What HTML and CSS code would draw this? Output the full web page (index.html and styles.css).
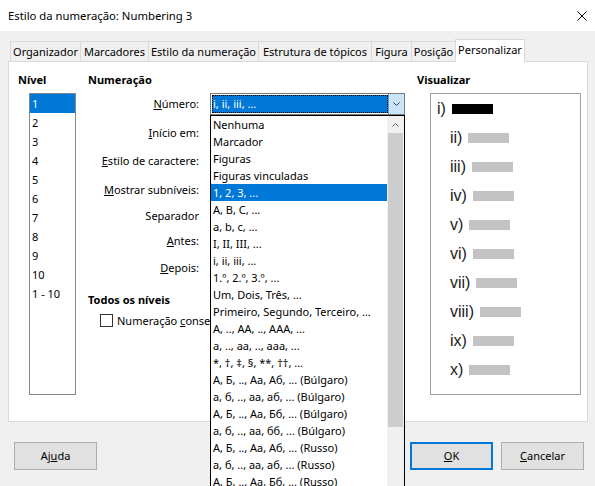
FILE: index.html
```html
<!DOCTYPE html>
<html lang="pt">
<head>
<meta charset="utf-8">
<title>Estilo da numeração</title>
<link rel="stylesheet" href="styles.css">
</head>
<body>
<div class="window">
  <div class="titlebar">
    <span class="title">Estilo da numeração: Numbering 3</span>
    <svg class="close" width="10" height="10" viewBox="0 0 10 10"><path d="M0.5 0.5L9.5 9.5M9.5 0.5L0.5 9.5" stroke="#000" stroke-width="1" fill="none"/></svg>
  </div>
  <div class="dialog">
    <div class="tabs">
      <div class="tab t-org">Organizador</div>
      <div class="tab t-mar">Marcadores</div>
      <div class="tab t-est">Estilo da numeração</div>
      <div class="tab t-top">Estrutura de tópicos</div>
      <div class="tab t-fig">Figura</div>
      <div class="tab t-pos">Posição</div>
      <div class="tab active">Personalizar</div>
    </div>
    <div class="panel">
      <div class="col-level">
        <div class="heading">Nível</div>
        <div class="levels">
          <div class="lv sel">1</div>
          <div class="lv">2</div>
          <div class="lv">3</div>
          <div class="lv">4</div>
          <div class="lv">5</div>
          <div class="lv">6</div>
          <div class="lv">7</div>
          <div class="lv">8</div>
          <div class="lv">9</div>
          <div class="lv">10</div>
          <div class="lv">1 - 10</div>
        </div>
      </div>
      <div class="col-num">
        <div class="heading">Numeração</div>
        <div class="form">
          <div class="row r-num">
            <div class="lbl"><u>N</u>úmero:</div>
            <div class="combo">
              <div class="combo-val">i, ii, iii, ...</div>
              <div class="combo-btn"><svg width="7" height="4" viewBox="0 0 7 4"><path d="M0.5 0.5L3.5 3.5L6.5 0.5" fill="none" stroke="#3c3c3c" stroke-width="1"/></svg></div>
              <div class="dropdown">
                <div class="opts">
                  <div class="opt">Nenhuma</div>
                  <div class="opt">Marcador</div>
                  <div class="opt">Figuras</div>
                  <div class="opt">Figuras vinculadas</div>
                  <div class="opt sel">1, 2, 3, ...</div>
                  <div class="opt">A, B, C, ...</div>
                  <div class="opt">a, b, c, ...</div>
                  <div class="opt">I, II, III, ...</div>
                  <div class="opt">i, ii, iii, ...</div>
                  <div class="opt">1.º, 2.º, 3.º, ...</div>
                  <div class="opt">Um, Dois, Três, ...</div>
                  <div class="opt">Primeiro, Segundo, Terceiro, ...</div>
                  <div class="opt">A, .., AA, .., AAA, ...</div>
                  <div class="opt">a, .., aa, .., aaa, ...</div>
                  <div class="opt">*, †, ‡, §, **, ††, ...</div>
                  <div class="opt">А, Б, .., Аа, Аб, ... (Búlgaro)</div>
                  <div class="opt">а, б, .., аа, аб, ... (Búlgaro)</div>
                  <div class="opt">А, Б, .., Аа, Бб, ... (Búlgaro)</div>
                  <div class="opt">а, б, .., аа, бб, ... (Búlgaro)</div>
                  <div class="opt">А, Б, .., Аа, Аб, ... (Russo)</div>
                  <div class="opt">а, б, .., аа, аб, ... (Russo)</div>
                  <div class="opt">А, Б, .., Аа, Бб, ... (Russo)</div>
                </div>
                <div class="sb">
                  <div class="sb-up"><svg width="7" height="4" viewBox="0 0 7 4"><path d="M0.5 3.5L3.5 0.5L6.5 3.5" fill="none" stroke="#606060" stroke-width="1"/></svg></div>
                  <div class="sb-thumb"></div>
                </div>
              </div>
            </div>
          </div>
          <div class="row r-ini"><div class="lbl"><u>I</u>nício em:</div></div>
          <div class="row r-est"><div class="lbl"><u>E</u>stilo de caractere:</div></div>
          <div class="row r-mos"><div class="lbl"><u>M</u>ostrar subníveis:</div></div>
          <div class="row r-sep"><div class="lbl">Separador</div></div>
          <div class="row r-ant"><div class="lbl"><u>A</u>ntes:</div></div>
          <div class="row r-dep"><div class="lbl"><u>D</u>epois:</div></div>
        </div>
        <div class="heading">Todos os níveis</div>
        <div class="check-row">
          <span class="cb"></span>
          <span class="cb-text">Numeração <u>c</u>onsecutiva</span>
        </div>
      </div>
      <div class="col-preview">
        <div class="heading">Visualizar</div>
        <div class="preview">
          <div class="pv first">i)<span class="bar dark"></span></div>
          <div class="pv">ii)<span class="bar"></span></div>
          <div class="pv">iii)<span class="bar"></span></div>
          <div class="pv">iv)<span class="bar"></span></div>
          <div class="pv">v)<span class="bar"></span></div>
          <div class="pv">vi)<span class="bar"></span></div>
          <div class="pv">vii)<span class="bar"></span></div>
          <div class="pv">viii)<span class="bar"></span></div>
          <div class="pv">ix)<span class="bar"></span></div>
          <div class="pv">x)<span class="bar"></span></div>
        </div>
      </div>
    </div>
    <div class="footer">
      <div class="btn">Aj<u>u</u>da</div>
      <div class="btn-group">
        <div class="btn default"><u>O</u>K</div>
        <div class="btn"><u>C</u>ancelar</div>
      </div>
    </div>
  </div>
</div>
</body>
</html>
```

FILE: styles.css
```css
html, body {
  margin: 0;
  padding: 0;
}
body {
  font-family: "Noto Sans", "Liberation Sans", sans-serif;
  font-size: 11px;
  color: #000;
  background: #f0f0f0;
}
u {
  text-decoration: underline;
  text-underline-offset: 1px;
}
.window {
  width: 595px;
  height: 486px;
  overflow: hidden;
  background: #f0f0f0;
}
.titlebar {
  height: 31px;
  background: #fff;
  display: flex;
  align-items: center;
  justify-content: space-between;
  padding: 0 8px;
}
.title {
  font-size: 11.3px;
  line-height: 31px;
}
.close {
  display: block;
}
.dialog {
  padding-left: 8px;
}
.tabs {
  display: flex;
  align-items: flex-end;
  height: 22px;
  margin-top: 8px;
  padding-left: 2px;
}
.tab {
  box-sizing: border-box;
  height: 20px;
  border-top: 1px solid #d9d9d9;
  border-left: 1px solid #d9d9d9;
  background: #f0f0f0;
  text-align: center;
  line-height: 19px;
  white-space: nowrap;
  overflow: hidden;
}
.t-org { width: 70px; }
.t-mar { width: 68px; }
.t-est { width: 110px; }
.t-top { width: 113px; }
.t-fig { width: 40px; }
.t-pos { width: 44px; }
.tab.active {
  width: 70px;
  height: 23px;
  margin-bottom: -1px;
  border-right: 1px solid #d9d9d9;
  background: #fff;
  position: relative;
  z-index: 1;
  line-height: 19px;
}
.panel {
  box-sizing: border-box;
  width: 580px;
  height: 361px;
  border: 1px solid #d9d9d9;
  background: #fff;
  display: flex;
  padding: 10px 0 0 9px;
}
.heading {
  font-weight: 700;
  line-height: 15px;
  white-space: nowrap;
}
.col-level {
  width: 70px;
  flex: none;
}
.levels {
  box-sizing: border-box;
  margin: 6px 0 0 11px;
  width: 47px;
  height: 302px;
  border: 1px solid #828790;
}
.lv {
  height: 19px;
  line-height: 19px;
  padding-left: 2px;
}
.lv.sel {
  background: #0078d7;
  color: #fff;
}
.col-num {
  width: 329px;
  flex: none;
}
.form {
  margin-top: 6px;
}
.row {
  display: flex;
  column-gap: 11px;
}
.r-num { height: 29px; }
.r-ini { height: 28px; }
.r-est { height: 29px; }
.r-mos { height: 26px; }
.r-sep { height: 25px; }
.r-ant { height: 27px; }
.r-dep { height: 35px; }
.lbl {
  width: 111px;
  flex: none;
  text-align: right;
  line-height: 22px;
  height: 22px;
  white-space: nowrap;
}
.combo {
  box-sizing: border-box;
  width: 195px;
  height: 22px;
  border: 1px solid #7a7a7a;
  background: #fff;
  display: flex;
  position: relative;
  z-index: 2;
}
.combo-val {
  flex: 1;
  margin: 1px 0 1px 1px;
  box-sizing: border-box;
  height: 18px;
  border: 1px dotted #000;
  background: #0078d7;
  color: #fff;
  line-height: 16px;
  padding-left: 0;
}
.combo-btn {
  width: 16px;
  margin: 0;
  box-sizing: border-box;
  border-left: 1px solid #569de5;
  background: #cce4f7;
  display: flex;
  align-items: center;
  justify-content: center;
}
.combo-btn svg {
  display: block;
}
.dropdown {
  position: absolute;
  left: -1px;
  top: calc(100% + 1px);
  box-sizing: border-box;
  width: 195px;
  height: 400px;
  border: 1px solid #000;
  background: #fff;
  display: flex;
}
.opts {
  flex: 1;
  min-width: 0;
}
.opt {
  height: 17px;
  line-height: 17px;
  padding-left: 2px;
  white-space: nowrap;
  overflow: hidden;
}
.opt.sel {
  background: #0078d7;
  color: #fff;
}
.sb {
  width: 17px;
  flex: none;
  background: #f0f0f0;
  display: flex;
  flex-direction: column;
  align-items: center;
}
.sb-up {
  width: 17px;
  height: 17px;
  display: flex;
  align-items: center;
  justify-content: center;
}
.sb-up svg {
  display: block;
}
.sb-thumb {
  width: 15px;
  height: 294px;
  background: #cdcdcd;
}
.check-row {
  display: flex;
  align-items: center;
  width: 110px;
  height: 15px;
  margin: 6px 0 0 12px;
  white-space: nowrap;
  overflow: hidden;
}
.cb {
  box-sizing: border-box;
  width: 13px;
  height: 13px;
  border: 1px solid #333;
  background: #fff;
  margin-right: 4px;
  flex: none;
}
.cb-text {
  line-height: 15px;
}
.col-preview {
  flex: 1;
}
.preview {
  box-sizing: border-box;
  margin: 6px 0 0 13px;
  width: 151px;
  height: 302px;
  border: 1px solid #a0a0a0;
}
.pv {
  display: flex;
  align-items: center;
  height: 29px;
  padding-left: 19px;
  font-family: "Liberation Sans", Arial, sans-serif;
  font-size: 16px;
  color: #1b1b1b;
}
.pv.first {
  padding-left: 6px;
}
.bar {
  display: block;
  width: 41px;
  height: 10px;
  margin-left: 6px;
  background: #c3c3c3;
}
.bar.dark {
  background: #000;
}
.footer {
  width: 580px;
  box-sizing: border-box;
  display: flex;
  justify-content: space-between;
  margin-top: 20px;
  padding: 0 4px 0 6px;
}
.btn-group {
  display: flex;
  column-gap: 8px;
}
.btn {
  box-sizing: border-box;
  width: 83px;
  height: 28px;
  border: 1px solid #adadad;
  background: #e1e1e1;
  text-align: center;
  line-height: 26px;
}
.btn.default {
  border: 2px solid #0078d7;
  line-height: 24px;
}
```
